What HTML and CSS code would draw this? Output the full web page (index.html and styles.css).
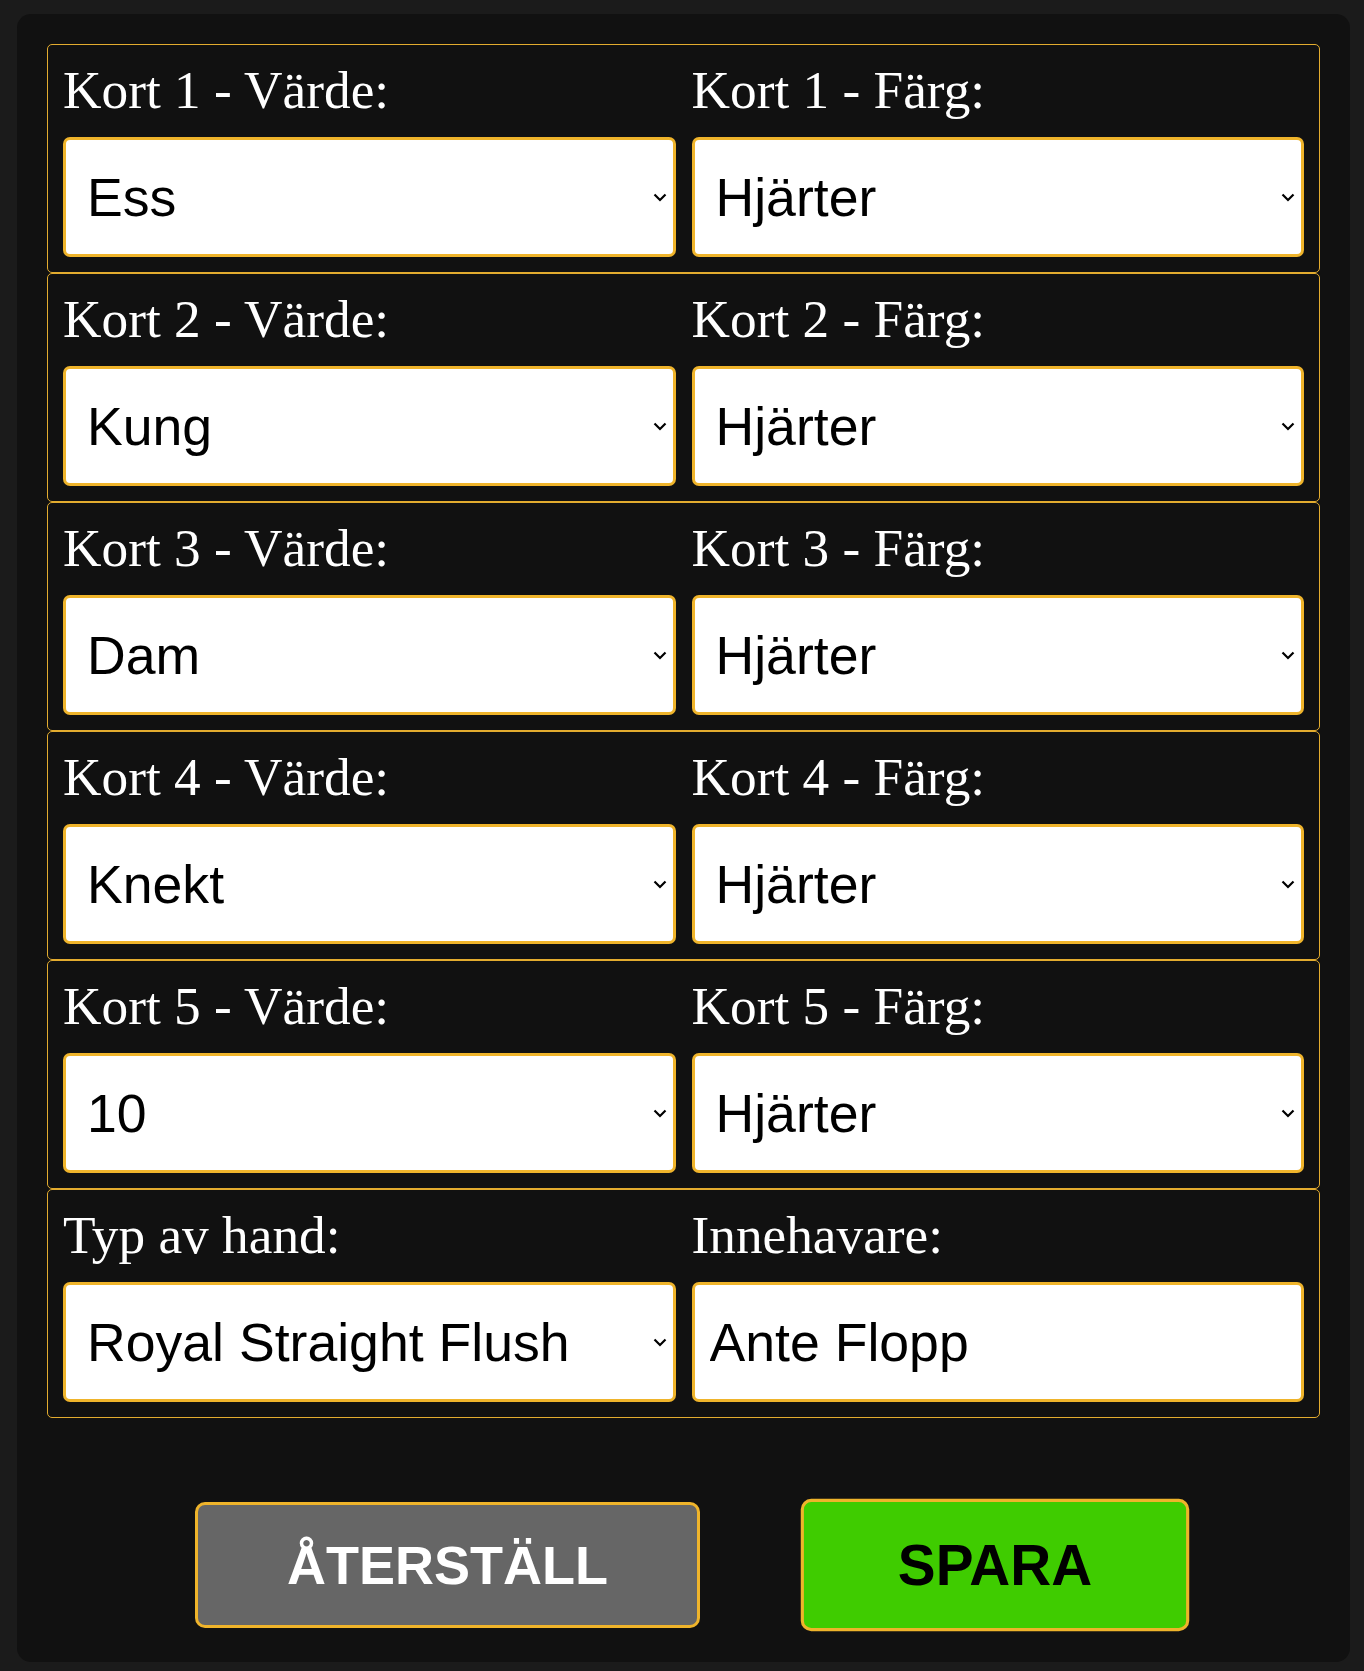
FILE: index.html
```html
<!DOCTYPE html>
<html lang="sv">
<head>
<meta charset="utf-8">
<title>Hand</title>
<link rel="stylesheet" href="styles.css">
</head>
<body>
<div class="panel">
  <form class="hand-form">
    <div class="row">
      <div class="field"><label class="lbl">Kort 1 - Värde:</label><select class="ctl"><option>Ess</option></select></div>
      <div class="field"><label class="lbl">Kort 1 - Färg:</label><select class="ctl"><option>Hjärter</option></select></div>
    </div>
    <div class="row">
      <div class="field"><label class="lbl">Kort 2 - Värde:</label><select class="ctl"><option>Kung</option></select></div>
      <div class="field"><label class="lbl">Kort 2 - Färg:</label><select class="ctl"><option>Hjärter</option></select></div>
    </div>
    <div class="row">
      <div class="field"><label class="lbl">Kort 3 - Värde:</label><select class="ctl"><option>Dam</option></select></div>
      <div class="field"><label class="lbl">Kort 3 - Färg:</label><select class="ctl"><option>Hjärter</option></select></div>
    </div>
    <div class="row">
      <div class="field"><label class="lbl">Kort 4 - Värde:</label><select class="ctl"><option>Knekt</option></select></div>
      <div class="field"><label class="lbl">Kort 4 - Färg:</label><select class="ctl"><option>Hjärter</option></select></div>
    </div>
    <div class="row">
      <div class="field"><label class="lbl">Kort 5 - Värde:</label><select class="ctl"><option>10</option></select></div>
      <div class="field"><label class="lbl">Kort 5 - Färg:</label><select class="ctl"><option>Hjärter</option></select></div>
    </div>
    <div class="row">
      <div class="field"><label class="lbl">Typ av hand:</label><select class="ctl"><option>Royal Straight Flush</option></select></div>
      <div class="field"><label class="lbl">Innehavare:</label><input class="ctl ctl-text" type="text" value="Ante Flopp"></div>
    </div>
    <div class="actions">
      <button type="button" class="btn btn-reset">ÅTERSTÄLL</button>
      <button type="button" class="btn btn-save">SPARA</button>
    </div>
  </form>
</div>
</body>
</html>
```

FILE: styles.css
```css
html, body {
  margin: 0;
  padding: 0;
  background: #1b1b1b;
}
body {
  padding: 14px 14px 9px 17px;
}
.panel {
  background: #111111;
  border-radius: 14px;
  padding: 30px 30px 31px 30px;
  width: 1273px;
}
.hand-form {
  margin: 0;
}
.row {
  display: grid;
  grid-template-columns: 1fr 1fr;
  column-gap: 16px;
  border: 1px solid #e3ac2f;
  border-radius: 5px;
  padding: 15px 15px 15px 15px;
  height: 229px;
  box-sizing: border-box;
}
.field {
  display: flex;
  flex-direction: column;
  min-width: 0;
}
.lbl {
  font-family: "Liberation Serif", "Times New Roman", serif;
  font-size: 53.3px;
  line-height: 61px;
  color: #ffffff;
  margin-bottom: 16px;
}
.ctl {
  box-sizing: border-box;
  width: 100%;
  height: 120px;
  border: 3px solid #efb42b;
  border-radius: 7px;
  background-color: #ffffff;
  color: #000000;
  font-family: "Liberation Sans", Arial, sans-serif;
  font-size: 53.6px;
  padding: 0 40px 0 21px;
  margin: 0;
  outline: none;
}
select.ctl {
  -webkit-appearance: none;
  appearance: none;
  background-image: url("data:image/svg+xml;utf8,<svg xmlns='http://www.w3.org/2000/svg' width='14' height='9' viewBox='0 0 14 9'><polyline points='1.5,1.5 7,7 12.5,1.5' fill='none' stroke='black' stroke-width='2.2'/></svg>");
  background-repeat: no-repeat;
  background-position: right 6px center;
  background-size: 14px 9px;
}
.ctl-text {
  padding: 0 15px;
}
.actions {
  display: flex;
  justify-content: center;
  align-items: center;
  gap: 110px;
  margin-top: 80px;
  padding-left: 8px;
  height: 133px;
}
.btn {
  font-family: "Liberation Sans", Arial, sans-serif;
  font-weight: bold;
  font-size: 54px;
  line-height: 62px;
  border: 3px solid #efb42b;
  border-radius: 10px;
  padding: 29px 0;
  cursor: pointer;
}
.btn-reset {
  background: #666666;
  color: #ffffff;
  width: 505px;
}
.btn-save {
  background: #3fcc00;
  color: #000000;
  width: 370px;
  transform: scale(1.05);
}
```
